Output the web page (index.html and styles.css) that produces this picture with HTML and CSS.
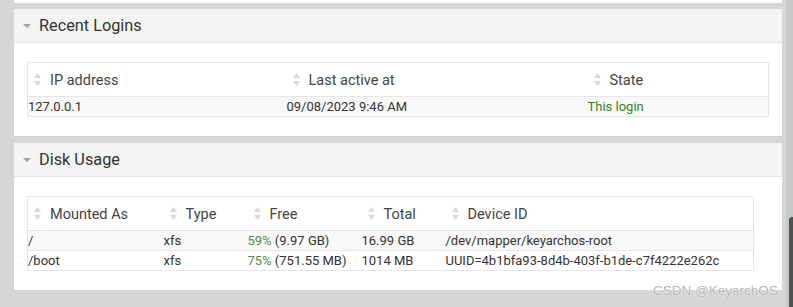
FILE: index.html
```html
<!DOCTYPE html>
<html>
<head>
<meta charset="utf-8">
<link rel="stylesheet" href="styles.css">
</head>
<body>
<div class="page">
  <div class="prev-panel"></div>

  <section class="panel">
    <div class="panel-head"><span class="caret"></span><h2>Recent Logins</h2></div>
    <div class="panel-body">
      <table class="grid logins">
        <thead>
          <tr>
            <th class="c-ip"><svg class="sort" viewBox="0 0 7 13"><path d="M3.5 0L7 5H0Z"/><path d="M0 8H7L3.5 13Z"/></svg>IP address</th>
            <th class="c-last"><svg class="sort" viewBox="0 0 7 13"><path d="M3.5 0L7 5H0Z"/><path d="M0 8H7L3.5 13Z"/></svg>Last active at</th>
            <th class="c-state"><svg class="sort" viewBox="0 0 7 13"><path d="M3.5 0L7 5H0Z"/><path d="M0 8H7L3.5 13Z"/></svg>State</th>
          </tr>
        </thead>
        <tbody>
          <tr class="odd">
            <td>127.0.0.1</td>
            <td>09/08/2023 9:46 AM</td>
            <td class="ok">This login</td>
          </tr>
        </tbody>
      </table>
    </div>
  </section>

  <section class="panel">
    <div class="panel-head"><span class="caret"></span><h2>Disk Usage</h2></div>
    <div class="panel-body">
      <table class="grid disks">
        <thead>
          <tr>
            <th class="c-mount"><svg class="sort" viewBox="0 0 7 13"><path d="M3.5 0L7 5H0Z"/><path d="M0 8H7L3.5 13Z"/></svg>Mounted As</th>
            <th class="c-type"><svg class="sort" viewBox="0 0 7 13"><path d="M3.5 0L7 5H0Z"/><path d="M0 8H7L3.5 13Z"/></svg>Type</th>
            <th class="c-free"><svg class="sort" viewBox="0 0 7 13"><path d="M3.5 0L7 5H0Z"/><path d="M0 8H7L3.5 13Z"/></svg>Free</th>
            <th class="c-total"><svg class="sort" viewBox="0 0 7 13"><path d="M3.5 0L7 5H0Z"/><path d="M0 8H7L3.5 13Z"/></svg>Total</th>
            <th class="c-dev"><svg class="sort" viewBox="0 0 7 13"><path d="M3.5 0L7 5H0Z"/><path d="M0 8H7L3.5 13Z"/></svg>Device ID</th>
          </tr>
        </thead>
        <tbody>
          <tr class="odd">
            <td>/</td>
            <td>xfs</td>
            <td><span class="pct">59%</span> (9.97 GB)</td>
            <td>16.99 GB</td>
            <td>/dev/mapper/keyarchos-root</td>
          </tr>
          <tr>
            <td>/boot</td>
            <td>xfs</td>
            <td><span class="pct">75%</span> (751.55 MB)</td>
            <td>1014 MB</td>
            <td>UUID=4b1bfa93-8d4b-403f-b1de-c7f4222e262c</td>
          </tr>
        </tbody>
      </table>
    </div>
  </section>
</div>
<div class="scrollbar"><div class="thumb"></div></div>
<div class="watermark">CSDN @KeyarchOS</div>
</body>
</html>
```

FILE: styles.css
```css
html, body {
  margin: 0;
  padding: 0;
}
body {
  width: 793px;
  height: 307px;
  overflow: hidden;
  background: #d6d6d6;
  font-family: Roboto, "Liberation Sans", sans-serif;
  color: #333;
  position: relative;
}
.page {
  width: 768px;
  padding-left: 14px;
  display: flex;
  flex-direction: column;
}
.prev-panel {
  height: 3px;
  background: #fff;
  margin-bottom: 6px;
}
.panel {
  background: #fff;
  margin-bottom: 7px;
}
.panel-head {
  height: 33px;
  background: #f4f4f4;
  border-bottom: 1px solid #e4e4e4;
  display: flex;
  align-items: center;
}
.caret {
  width: 0;
  height: 0;
  border-left: 4px solid transparent;
  border-right: 4px solid transparent;
  border-top: 4px solid #a0a0a0;
  margin-left: 9px;
  margin-right: 8px;
  margin-top: 1px;
}
.panel-head h2 {
  margin: 0;
  font-size: 16.3px;
  font-weight: 400;
  color: #333;
  line-height: 33px;
}
.panel-body {
  padding: 19px 13px 19px 13px;
}
.grid {
  border-collapse: collapse;
  border: 1px solid #e6e6e6;
  font-size: 13px;
  color: #333;
}
.grid.logins {
  width: 742px;
}
.grid.disks {
  width: 727px;
}
.grid th {
  box-sizing: border-box;
  height: 34px;
  padding: 2px 0 0 6px;
  text-align: left;
  font-weight: 400;
  font-size: 14.5px;
  color: #444;
  border-bottom: 1px solid #e6e6e6;
  white-space: nowrap;
  background: #fff;
}
.grid td {
  height: 19px;
  padding: 0;
  border-bottom: 1px solid #e6e6e6;
  white-space: nowrap;
  line-height: 19px;
}
.grid tr.odd td {
  background: #f8f8f8;
}
.sort {
  display: inline-block;
  vertical-align: middle;
  width: 7px;
  height: 13px;
  margin-right: 9px;
  margin-top: -3px;
  fill: #d8d8d8;
}
.c-ip { width: 259px; }
.c-last { width: 301px; }
.c-mount { width: 136px; }
.c-type { width: 84px; }
.c-free { width: 114px; }
.c-total { width: 84px; }
.ok { color: #2b8a1f; }
.pct { color: #4f8f45; }

.scrollbar {
  position: absolute;
  top: 0;
  right: 0;
  width: 7px;
  height: 307px;
  background: #c6c9c6;
}
.thumb {
  position: absolute;
  top: 217px;
  right: 0;
  width: 4px;
  height: 100px;
  background: #4c5450;
  border-radius: 3px 0 0 0;
}
.watermark {
  position: absolute;
  left: 653px;
  top: 283px;
  font-family: "Liberation Sans", Arial, sans-serif;
  font-size: 13.5px;
  color: #b4b4b4;
  text-shadow: 0 0 1px #fff, 0 0 1px #fff;
}
```
